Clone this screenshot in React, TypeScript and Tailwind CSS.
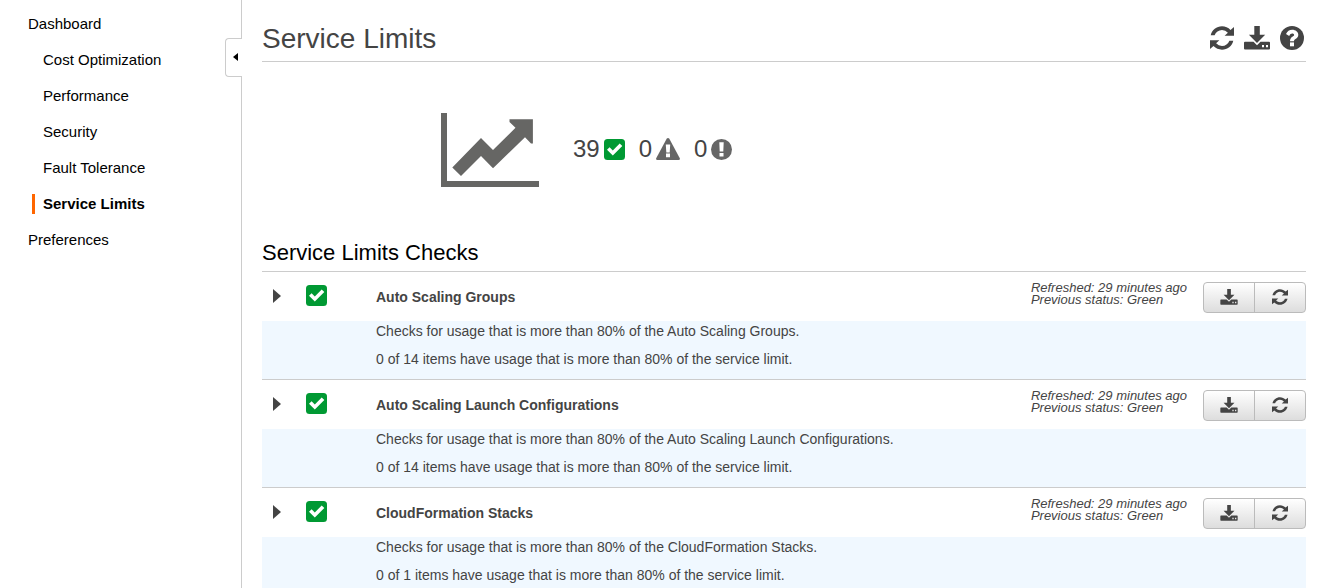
import type { ReactNode } from "react";

type IconProps = { className?: string };

function RefreshIcon({ className }: IconProps) {
  return (
    <svg viewBox="0 0 24 24" className={className} fill="currentColor" aria-hidden="true">
      <path d="M.7 9.300C2 4 6.500.3 12 .3c3.300 0 6.200 1.300 8.500 3.600L24 1v8.800h-9.400l3.300-3.100A8.300 8.300 0 0 0 12 4C8.600 4 5.900 6.100 4.600 9.300z" />
      <path d="M23.300 14.700c-1.300 5.300-5.800 9-11.300 9-3.300 0-6.200-1.300-8.500-3.600L0 23v-8.800h9.400l-3.300 3.100A8.300 8.300 0 0 0 12 20c3.400 0 6.100-2.100 7.400-5.300z" />
    </svg>
  );
}

function DownloadIcon({ className }: IconProps) {
  return (
    <svg viewBox="0 0 26 24" className={className} fill="currentColor" aria-hidden="true">
      <path d="M10.300 0h5.500v8.800h5.400L13 16.900 4.900 8.800h5.400z" />
      <path
        fillRule="evenodd"
        d="M1 15.800h8.500l3.500 3.400 3.500-3.400H25q1 0 1 1v5.700q0 1-1 1H1q-1 0-1-1v-5.700q0-1 1-1zM18 19v2.200h2V19zM22 19v2.200h2V19z"
      />
    </svg>
  );
}

function QuestionIcon({ className }: IconProps) {
  return (
    <svg viewBox="0 0 24 24" className={className} aria-hidden="true">
      <circle cx="12" cy="12" r="12" fill="currentColor" />
      <path
        fill="#fff"
        d="M6 8C7.200 5.100 9.400 3.700 12.200 3.700c3.400 0 6.100 2.200 6.100 5.100 0 2.100-1.100 3.300-2.800 4.300-1.100.7-1.500 1.100-1.500 2.200h-4c0-2.600.9-3.800 2.800-4.900 1-.6 1.300-.9 1.300-1.500 0-.8-.8-1.400-1.900-1.400-1.300 0-2 .8-3 2.400z"
      />
      <path fill="#fff" d="M10 16.400h4v3.900h-4z" />
    </svg>
  );
}

function CheckIcon({ className }: IconProps) {
  return (
    <svg viewBox="0 0 21 21" className={className} role="img" aria-label="Green">
      <rect width="21" height="21" rx="3.500" fill="#093" />
      <path fill="#fff" d="M3 10.800l2.600-2.600 3.200 3.200 6.900-6.900 2.600 2.600-9.500 9.500z" />
    </svg>
  );
}

function WarningIcon({ className }: IconProps) {
  return (
    <svg viewBox="0 0 24 22" className={className} role="img" aria-label="Yellow">
      <path fill="#666" d="M10.800.6q1.200-1.200 2.400 0L23.800 20.300q.5 1.700-1.200 1.700H1.400q-1.700 0-1.200-1.700z" />
      <path fill="#fff" d="M9.800 6.500h4.400l-.5 8h-3.400zM10 15.600h4v3.600h-4z" />
    </svg>
  );
}

function AlertIcon({ className }: IconProps) {
  return (
    <svg viewBox="0 0 21 21" className={className} role="img" aria-label="Red">
      <circle cx="10.500" cy="10.500" r="10.500" fill="#666" />
      <path fill="#fff" d="M8.300 3.300h4.400l-.4 9.300H8.700zM8.500 13.900h4v3.600h-4z" />
    </svg>
  );
}

function ChartIcon({ className }: IconProps) {
  return (
    <svg viewBox="0 0 98 74" className={className} fill="#666664" aria-hidden="true">
      <path d="M0 0h6v68h92v6H0z" />
      <path d="M11.300 54.500L40 25l12 12L74.500 14.700 68.500 9V6.300h23.400V30.500H90L84 24.300 52 55.300 40 43 20 63z" />
    </svg>
  );
}

const navItems = [
  { label: "Dashboard", style: "pl-7" },
  { label: "Cost Optimization", style: "pl-[43px]" },
  { label: "Performance", style: "pl-[43px]" },
  { label: "Security", style: "pl-[43px]" },
  { label: "Fault Tolerance", style: "pl-[43px]" },
  { label: "Service Limits", style: "pl-8", active: true },
  { label: "Preferences", style: "pl-7" },
];

const checks = [
  { name: "Auto Scaling Groups", items: 14 },
  { name: "Auto Scaling Launch Configurations", items: 14 },
  { name: "CloudFormation Stacks", items: 1 },
];

function Sidebar() {
  return (
    <aside className="relative w-[242px] shrink-0 border-r border-[#ccc]">
      <nav className="flex flex-col pt-1.5 text-[15px] text-black">
        {navItems.map((item) => (
          <a key={item.label} href="#" className={`flex h-9 items-center ${item.style}`}>
            {item.active ? (
              <span className="border-l-3 border-[#f60] pl-2 leading-5 font-bold">{item.label}</span>
            ) : (
              item.label
            )}
          </a>
        ))}
      </nav>
      <button
        type="button"
        aria-label="Collapse navigation"
        className="absolute top-[38px] -right-px flex h-[39px] w-[17px] items-center justify-center rounded-l border border-r-0 border-[#ccc] bg-white pb-0.5"
      >
        <svg viewBox="0 0 5 8" className="ml-0.5 h-2 w-[5px]" aria-hidden="true">
          <path d="M5 0v8L0 4z" />
        </svg>
      </button>
    </aside>
  );
}

function Count({ value, children }: { value: number; children: ReactNode }) {
  return (
    <span className="flex items-center gap-1">
      {value}
      {children}
    </span>
  );
}

function CheckRow({ name, items }: { name: string; items: number }) {
  return (
    <li className="border-b border-[#ccc]">
      <div className="flex h-[49px] items-center pb-0.5">
        <button type="button" aria-label={`Expand ${name}`} className="ml-[11px] flex w-[33px] shrink-0">
          <svg viewBox="0 0 8 14" className="h-3.5 w-2" fill="#444" aria-hidden="true">
            <path d="M0 0l8 7-8 7z" />
          </svg>
        </button>
        <CheckIcon className="size-[21px] shrink-0" />
        <h3 className="ml-[49px] flex-1 pt-0.5 text-sm font-bold">{name}</h3>
        <p className="mr-4 pb-1 text-[13px] leading-3 italic">
          Refreshed: 29 minutes ago
          <br />
          Previous status: Green
        </p>
        <div className="mt-1 flex h-[31px] w-[103px] shrink-0 divide-x divide-[#bbb] rounded border border-[#bbb] bg-linear-to-b from-white to-[#ddd]">
          <button type="button" aria-label={`Download ${name}`} className="flex flex-1 items-center justify-center pb-0.5">
            <DownloadIcon className="h-4 w-[18px]" />
          </button>
          <button type="button" aria-label={`Refresh ${name}`} className="flex flex-1 items-center justify-center pb-0.5">
            <RefreshIcon className="size-4" />
          </button>
        </div>
      </div>
      <div className="flex flex-col gap-2 bg-[#f0f8ff] pb-[10px] pl-[114px] text-sm leading-5">
        <p>Checks for usage that is more than 80% of the {name}.</p>
        <p>0 of {items} items have usage that is more than 80% of the service limit.</p>
      </div>
    </li>
  );
}

export default function App() {
  return (
    <div className="flex min-h-screen bg-white font-['Liberation_Sans',Arial,sans-serif] text-[#444]">
      <Sidebar />
      <main className="min-w-0 flex-1 pr-[29px] pl-5">
        <header className="flex h-[62px] items-end justify-between border-b border-[#ccc] pb-1.5">
          <h1 className="text-[28px] leading-8">Service Limits</h1>
          <div className="flex gap-2.5 pr-0.5 pb-[5px]">
            <button type="button" aria-label="Refresh all">
              <RefreshIcon className="size-6" />
            </button>
            <button type="button" aria-label="Download all">
              <DownloadIcon className="h-6 w-[26px]" />
            </button>
            <button type="button" aria-label="Help">
              <QuestionIcon className="size-6" />
            </button>
          </div>
        </header>
        <section className="flex items-center gap-[34px] pt-[51px] pl-[179px]">
          <ChartIcon className="h-[74px] w-[98px]" />
          <div className="flex gap-3.5 pb-0.5 text-2xl">
            <Count value={39}>
              <CheckIcon className="size-[21px]" />
            </Count>
            <Count value={0}>
              <WarningIcon className="h-[22px] w-6" />
            </Count>
            <Count value={0}>
              <AlertIcon className="size-[21px]" />
            </Count>
          </div>
        </section>
        <section className="pt-[51px]">
          <h2 className="border-b border-[#ccc] pb-1 text-[22px] leading-[29px] text-black">Service Limits Checks</h2>
          <ul>
            {checks.map((check) => (
              <CheckRow key={check.name} {...check} />
            ))}
          </ul>
        </section>
      </main>
    </div>
  );
}
